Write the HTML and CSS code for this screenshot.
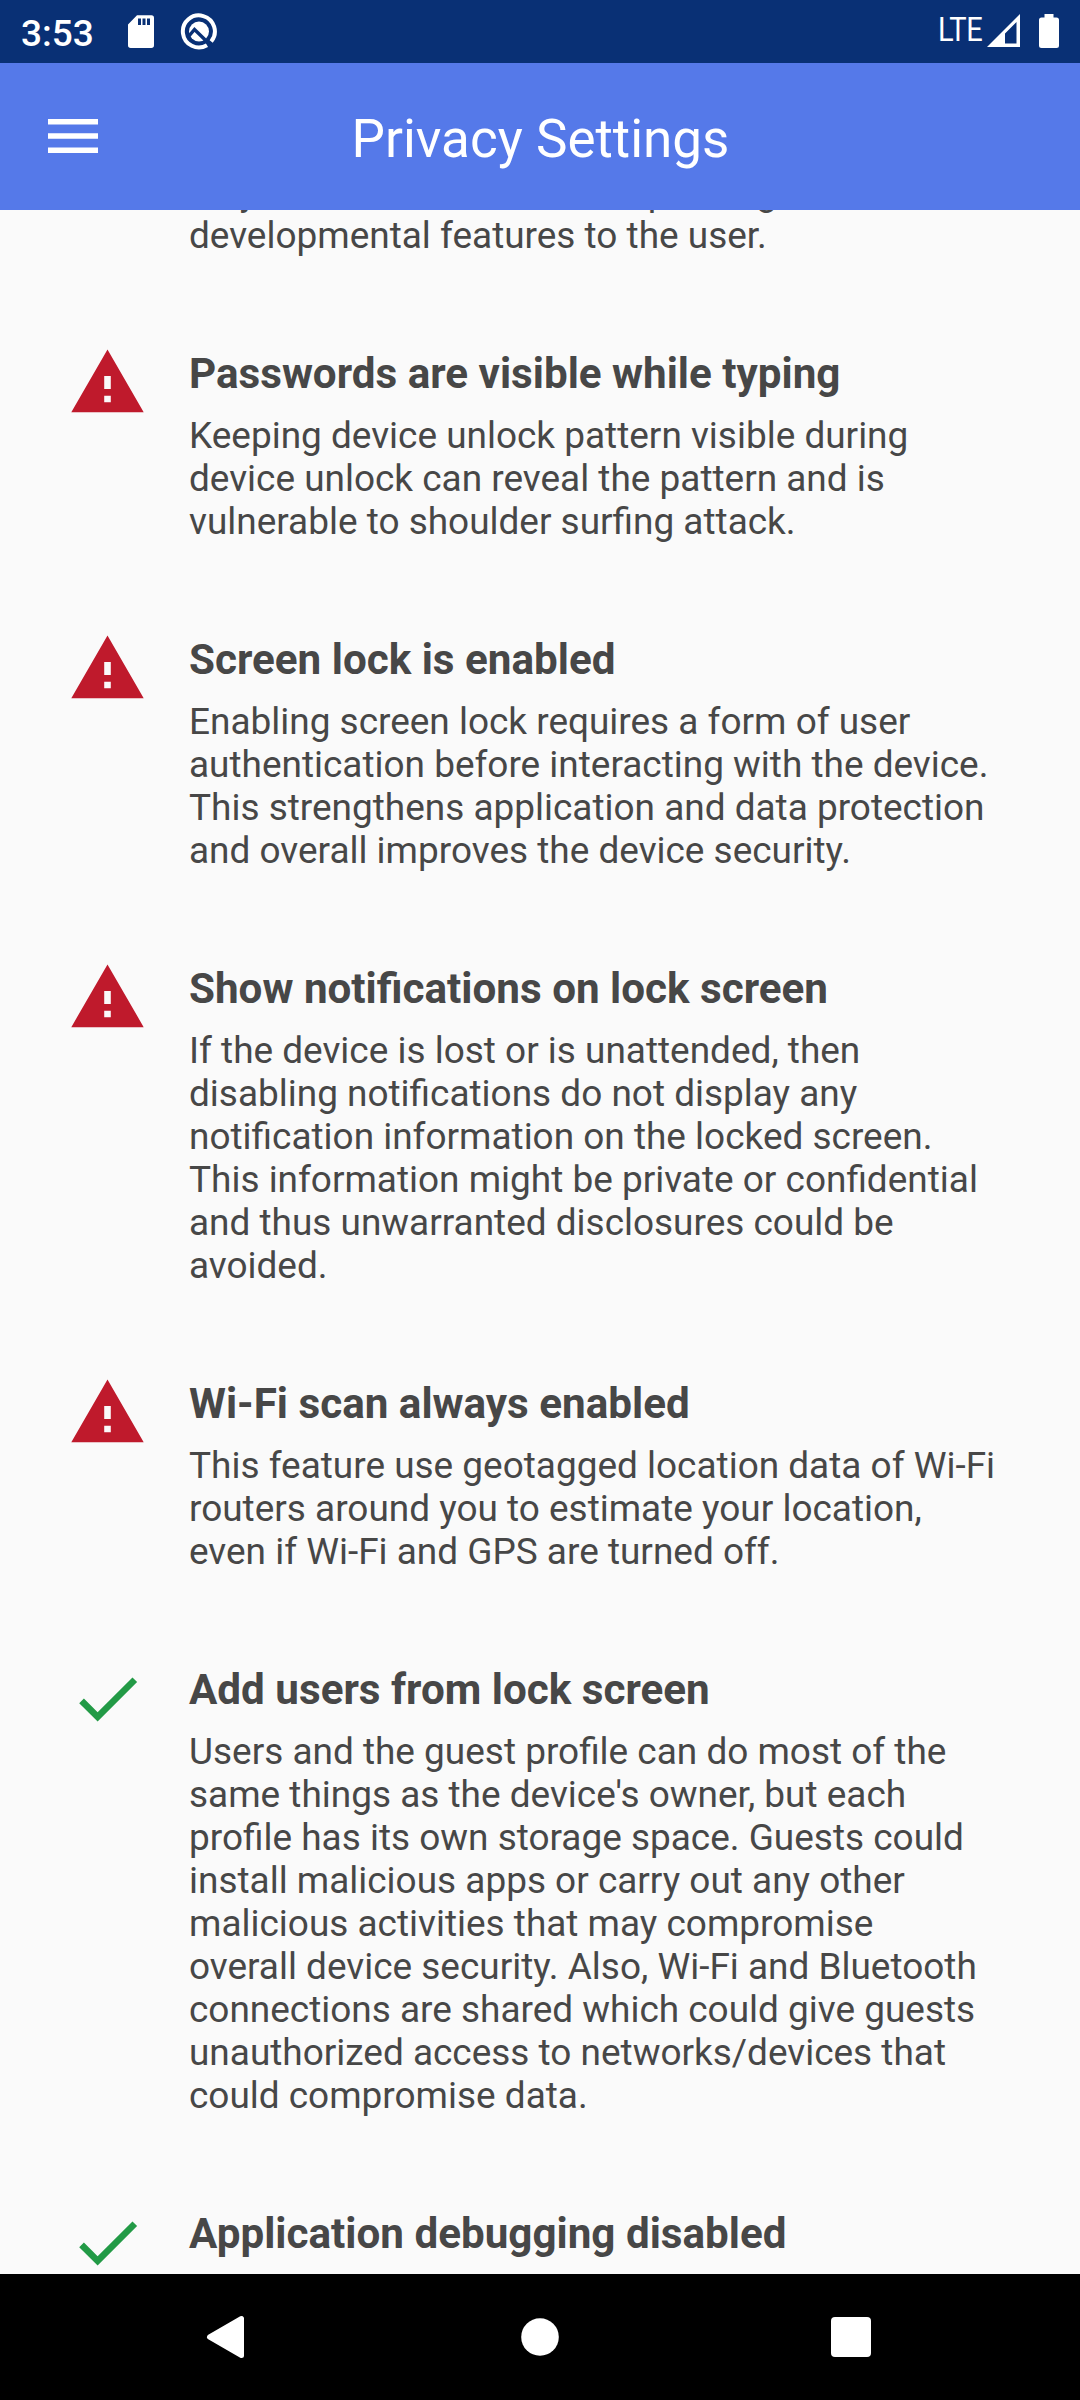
FILE: index.html
```html
<!DOCTYPE html>
<html lang="en">
<head>
<meta charset="utf-8">
<title>Privacy Settings</title>
<link rel="stylesheet" href="styles.css">
</head>
<body>
<svg class="defs" width="0" height="0" aria-hidden="true">
  <symbol id="warning" viewBox="0 0 24 24"><path fill="#bf1a2c" d="M1 21h22L12 2 1 21zm12-3h-2v-2h2v2zm0-4h-2v-4h2v4z"/></symbol>
  <symbol id="check" viewBox="0 0 24 24"><path fill="#229a46" d="M9 16.17L4.83 12l-1.42 1.41L9 19 21 7l-1.41-1.41z"/></symbol>
</svg>
<div class="screen">
  <div class="status">
    <span class="clock">3:53</span>
    <svg class="sd" width="28" height="34" viewBox="0 0 28 34"><path fill="#fff" fill-rule="evenodd" d="M10 .3H24.5Q27 .3 27 3V30.200Q27 32.900 24.300 32.900H3.700Q1 32.900 1 30.200V9.500ZM11 3.500V10H14V3.500ZM15.500 3.500V10H18.500V3.500ZM20 3.500V10H23V3.500Z"/></svg>
    <svg class="debug" width="38" height="38" viewBox="0 0 38 38"><path d="M27 33.200A16 16 0 1 1 31.200 29.600" fill="none" stroke="#fff" stroke-width="4"/><circle cx="19" cy="19.500" r="10" fill="#fff"/><path d="M9 24L14.500 17.500L31.500 34" fill="none" stroke="#093075" stroke-width="3.400"/></svg>
    <span class="network">LTE</span>
    <svg class="signal" width="33" height="33" viewBox="0 0 33 33"><path fill="#fff" fill-rule="evenodd" d="M0 33L33 0V33ZM18 19.500V29.500H29.500V8Z"/></svg>
    <svg class="battery" width="20" height="34" viewBox="0 0 20 34"><path fill="#fff" d="M5.500 0H14.500V3.500H17.500Q20 3.500 20 6V31.500Q20 34 17.500 34H2.500Q0 34 0 31.500V6Q0 3.500 2.500 3.500H5.500Z"/></svg>
  </div>
  <header class="appbar">
    <svg class="menu" width="50" height="34" viewBox="0 0 50 34"><path fill="#fff" d="M0 0H50V5.600H0ZM0 14.200H50V19.800H0ZM0 28.400H50V34H0Z"/></svg>
    <h1>Privacy Settings</h1>
  </header>
  <main class="list">
    <section class="item tail"><div class="copy"><p><span class="spread">only should be used before passing</span><br>developmental features to the user.</p></div></section>
    <section class="item"><svg class="mark"><use href="#warning"/></svg><div class="copy"><h2>Passwords are visible while typing</h2><p>Keeping device unlock pattern visible during<br>device unlock can reveal the pattern and is<br>vulnerable to shoulder surfing attack.</p></div></section>
    <section class="item"><svg class="mark"><use href="#warning"/></svg><div class="copy"><h2>Screen lock is enabled</h2><p>Enabling screen lock requires a form of user<br>authentication before interacting with the device.<br>This strengthens application and data protection<br>and overall improves the device security.</p></div></section>
    <section class="item"><svg class="mark"><use href="#warning"/></svg><div class="copy"><h2>Show notifications on lock screen</h2><p>If the device is lost or is unattended, then<br>disabling notifications do not display any<br>notification information on the locked screen.<br>This information might be private or confidential<br>and thus unwarranted disclosures could be<br>avoided.</p></div></section>
    <section class="item"><svg class="mark"><use href="#warning"/></svg><div class="copy"><h2>Wi-Fi scan always enabled</h2><p>This feature use geotagged location data of Wi-Fi<br>routers around you to estimate your location,<br>even if Wi-Fi and GPS are turned off.</p></div></section>
    <section class="item"><svg class="mark"><use href="#check"/></svg><div class="copy"><h2>Add users from lock screen</h2><p>Users and the guest profile can do most of the<br>same things as the device's owner, but each<br>profile has its own storage space. Guests could<br>install malicious apps or carry out any other<br>malicious activities that may compromise<br>overall device security. Also, Wi-Fi and Bluetooth<br>connections are shared which could give guests<br>unauthorized access to networks/devices that<br>could compromise data.</p></div></section>
    <section class="item"><svg class="mark"><use href="#check"/></svg><div class="copy"><h2>Application debugging disabled</h2></div></section>
  </main>
  <nav class="navbar">
    <svg width="43" height="44" viewBox="0 0 43 44"><path d="M3.500 22L35.500 3.500V40.500Z" fill="#fff" stroke="#fff" stroke-width="5" stroke-linejoin="round"/></svg>
    <svg width="38" height="38" viewBox="0 0 38 38"><circle cx="19" cy="19" r="18.800" fill="#fff"/></svg>
    <svg width="40" height="40" viewBox="0 0 40 40"><rect width="40" height="40" rx="4" fill="#fff"/></svg>
  </nav>
</div>
</body>
</html>
```
FILE: styles.css
```css
* { box-sizing: border-box; }
body { margin: 0; font-family: Roboto, sans-serif; }
h1, h2, p { margin: 0; }
.defs { display: none; }
.screen { display: flex; flex-direction: column; width: 1080px; height: 2400px; overflow: hidden; background: #fafafa; color: #474747; }
.status { display: flex; align-items: flex-start; flex: none; height: 63px; padding: 0 21px; background: #093075; color: #fff; }
.clock { width: 106px; font-size: 37px; font-weight: 500; line-height: 43px; padding-top: 12px; }
.sd { margin-top: 15px; }
.debug { margin: 12px 0 0 25px; }
.network { margin-left: auto; margin-right: 5px; padding-top: 11px; font-size: 33px; line-height: 38px; letter-spacing: -.5px; transform: scaleX(.88); transform-origin: right; }
.signal { margin-top: 14px; }
.battery { margin: 14px 0 0 19px; }
.appbar { display: grid; grid-template-columns: 1fr auto 1fr; align-items: center; flex: none; height: 147px; padding: 0 47px 0 48px; background: #5579e9; color: #fff; }
.menu { margin-bottom: 1px; }
h1 { font-size: 53px; font-weight: 400; line-height: 62px; padding-top: 5px; }
.list { flex: 1; min-height: 0; overflow: hidden; }
.item { display: flex; gap: 42px; padding: 0 68px 44px; }
.tail { margin-top: -39px; padding: 0 189px 86px; }
.mark { flex: none; width: 79px; height: 79px; }
.copy { white-space: nowrap; }
h2 { font-size: 42.2px; font-weight: 700; line-height: 49px; padding-top: 6px; margin-bottom: 16px; }
p { font-size: 36.96px; line-height: 43px; padding-bottom: 42px; }
.tail p { padding: 0; }
.spread { word-spacing: 1.6px; }
.navbar { display: flex; align-items: center; justify-content: space-between; flex: none; height: 126px; padding: 0 209px 0 206px; background: #000; }
```
